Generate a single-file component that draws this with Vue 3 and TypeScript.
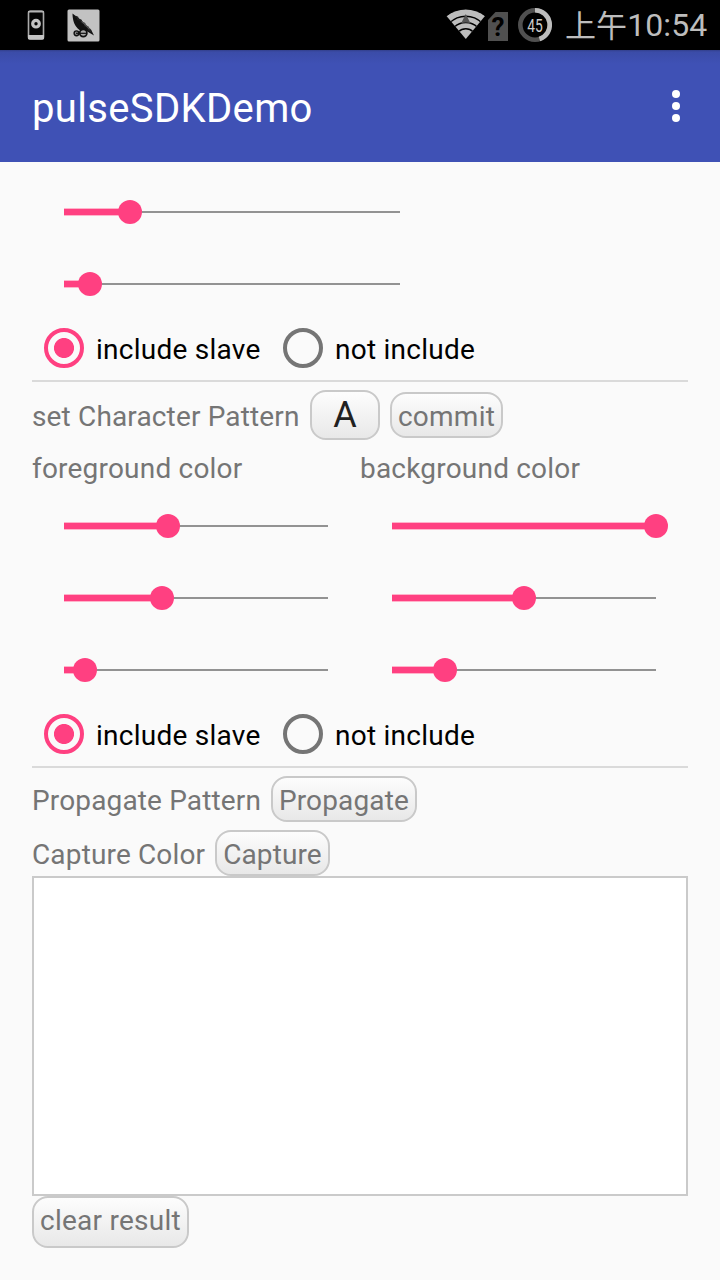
<script setup lang="ts">
import { ref } from 'vue'

const range = [66 / 336, 26 / 336]
const foreground = [104 / 264, 98 / 264, 21 / 264]
const background = [1, 0.5, 53 / 264]
const includeFirst = ref(true)
const includeSecond = ref(true)
const pct = (v: number) => `${v * 100}%`
</script>

<template>
  <div class="screen">
    <header class="status">
      <svg class="phone" width="18" height="30" viewBox="0 0 18 30">
        <rect x="1.5" y="1" width="15" height="28" rx="2" fill="#050505" stroke="#aaa" stroke-width="1.6" />
        <path d="M1 25h16v3.200q0 1.300-1.200 1.300H2.200Q1 29.500 1 28.200z" fill="#c4c4c4" />
        <path d="M1 1h16v1.500H1z" fill="#b5b5b5" />
        <circle cx="9" cy="13.700" r="3.300" fill="none" stroke="#c4c4c4" stroke-width="3.200" />
      </svg>
      <svg class="app" width="33" height="33" viewBox="0 0 33 33">
        <rect x=".5" y=".5" width="32" height="32" rx="1.500" fill="#c2c2c2" />
        <path d="M5.500 4.500C5.500 11 7.500 17.500 12.500 21l7 1 7.500 4.500-3-6-10-9.500z" fill="#111" />
        <path d="M8.500 7.500l2 .8.500 2 3 1 .5 2 3 1.200.5 2.500 3 1.300.5 2.500 3 2" fill="none" stroke="#222" stroke-width="1.600" />
        <path d="M15 12.500l8 8" stroke="#999" stroke-width=".7" />
        <circle cx="9.500" cy="24.300" r="2.400" fill="#888" stroke="#111" stroke-width="1.400" />
        <circle cx="16.300" cy="24" r="3.600" fill="#aaa" stroke="#111" stroke-width="1.700" />
        <path d="M9 24.300h11" stroke="#111" stroke-width="1.200" />
      </svg>
      <span class="grow"></span>
      <svg class="wifi" width="40" height="32" viewBox="0 0 40 32">
        <defs><clipPath id="fan"><path d="M.5 8C12-.8 27.500-.8 39 8L19.800 31z" /></clipPath></defs>
        <g clip-path="url(#fan)">
          <circle cx="19.800" cy="31" r="30" fill="#bdbdbd" />
          <g fill="none" stroke="#000" stroke-width="1.500">
            <circle cx="19.800" cy="31" r="22.800" />
            <circle cx="19.800" cy="31" r="16.500" />
            <circle cx="19.800" cy="31" r="10.300" />
          </g>
        </g>
        <path d="M19.800 6l4.800 9.500q-4.800-1.800-9.600 0z" fill="#555" />
      </svg>
      <svg class="sim" width="20" height="29" viewBox="0 0 20 29">
        <path d="M7.500 0H20v29H0V8z" fill="#505050" />
        <text x="10" y="24" text-anchor="middle" class="question">?</text>
      </svg>
      <svg class="battery" width="34" height="34" viewBox="0 0 34 34">
        <circle cx="17" cy="17" r="14.700" fill="none" stroke="#505050" stroke-width="4.600" />
        <path d="M17 2.300a14.700 14.700 0 0 1 4.500 28.700" fill="none" stroke="#bdbdbd" stroke-width="4.600" />
        <text x="17" y="23.500" text-anchor="middle" class="charge" textLength="15.500" lengthAdjust="spacingAndGlyphs">45</text>
      </svg>
      <span class="time"><span class="noon">上午</span>10:54</span>
    </header>

    <div class="bar">
      <h1>pulseSDKDemo</h1>
      <svg width="8" height="32" viewBox="0 0 8 32" fill="#fff">
        <circle cx="4" cy="4" r="4" /><circle cx="4" cy="16" r="4" /><circle cx="4" cy="28" r="4" />
      </svg>
    </div>

    <main>
      <div class="sliders narrow">
        <div v-for="(v, i) in range" :key="i" class="slider">
          <div class="track"><div class="fill" :style="{ width: pct(v) }"><i class="thumb"></i></div></div>
        </div>
      </div>

      <div class="radios">
        <label class="first" @click="includeFirst = true"><i class="radio" :class="{ on: includeFirst }"></i><span>include slave</span></label>
        <label @click="includeFirst = false"><i class="radio" :class="{ on: !includeFirst }"></i><span>not include</span></label>
      </div>
      <hr />

      <div class="row character">
        <span>set Character Pattern</span>
        <button class="letter">A</button>
        <button class="commit">commit</button>
      </div>

      <div class="columns">
        <section>
          <div class="caption">foreground color</div>
          <div v-for="(v, i) in foreground" :key="i" class="slider">
            <div class="track"><div class="fill" :style="{ width: pct(v) }"><i class="thumb"></i></div></div>
          </div>
        </section>
        <section>
          <div class="caption">background color</div>
          <div v-for="(v, i) in background" :key="i" class="slider">
            <div class="track"><div class="fill" :style="{ width: pct(v) }"><i class="thumb"></i></div></div>
          </div>
        </section>
      </div>

      <div class="radios">
        <label class="first" @click="includeSecond = true"><i class="radio" :class="{ on: includeSecond }"></i><span>include slave</span></label>
        <label @click="includeSecond = false"><i class="radio" :class="{ on: !includeSecond }"></i><span>not include</span></label>
      </div>
      <hr />

      <div class="row propagate">
        <span>Propagate Pattern</span>
        <button class="b-prop">Propagate</button>
      </div>
      <div class="row capture">
        <span>Capture Color</span>
        <button class="b-cap">Capture</button>
      </div>
      <div class="result"></div>
      <button class="clear">clear result</button>
    </main>
  </div>
</template>

<style>
body { margin: 0; background: #fafafa; }
</style>

<style scoped>
* { box-sizing: border-box; }
.screen {
  width: 720px; height: 1280px; overflow: hidden; background: #fafafa;
  font-family: Roboto, "Noto Sans CJK SC", sans-serif; font-size: 28px; line-height: 34px;
  color: #757575; letter-spacing: 0.25px; white-space: nowrap;
}
.status { height: 50px; background: #000; display: flex; align-items: center; padding: 0 12px 0 27px; }
.status svg { flex: none; }
.app { margin-left: 22px; }
.grow { flex: 1; }
.wifi { margin: -2px 2px 0 0; }
.sim { margin-right: 10px; margin-top: 2px; }
.question { font: 700 26px Roboto, sans-serif; fill: #000; letter-spacing: 0; }
.charge { font: 400 18.5px Roboto, sans-serif; fill: #ccc; letter-spacing: 0; }
.time { width: 143px; margin-left: 13px; color: #bdbdbd; font-size: 32px; font-weight: 400; letter-spacing: 0.1px; display: flex; align-items: center; }
.noon { font-family: "Noto Sans CJK SC", sans-serif; font-size: 31px; font-weight: 400; margin-top: -3px; }
.bar {
  height: 112px; padding: 0 40px 0 32px; display: flex; align-items: center; justify-content: space-between;
  background: linear-gradient(#323f8c 0, #3b4ca8 2px, #3f51b5 14px);
}
h1 { margin: 6px 0 0; font-size: 40px; line-height: 48px; font-weight: 400; color: #fff; letter-spacing: 0.35px; }
main { padding: 14px 32px 0; }
.slider { height: 72px; padding: 0 32px; display: flex; align-items: center; }
.narrow { width: 400px; }
.track { flex: 1; height: 8px; background: linear-gradient(transparent 3px, #929292 3px, #929292 5px, transparent 5px); }
.fill {
  height: 8px; display: flex; justify-content: flex-end; align-items: center;
  background: linear-gradient(#ffb3ca 1px, #ff4081 1px, #ff4081 7px, #ffb3ca 7px);
}
.thumb { flex: none; width: 24px; height: 24px; margin-right: -12px; border-radius: 50%; background: #ff4081; }
.radios { display: flex; height: 56px; padding-left: 12px; color: #000; }
.radios label { display: flex; align-items: center; }
.first { width: 239px; }
.radios span { margin: 4px 0 0 12px; }
.radio { width: 40px; height: 40px; border: 4px solid #757575; border-radius: 50%; display: block; }
.radio.on { border-color: #ff4081; background: radial-gradient(circle, #ff4081 9.600px, transparent 10.400px); }
hr { height: 2px; border: 0; margin: 4px 0 0; background: #dadada; }
.row { display: flex; align-items: center; }
.row > span { letter-spacing: 0.15px; }
button {
  font: inherit; color: #757575; letter-spacing: inherit; padding: 0; margin: 0; height: 46px;
  border: 2px solid #c9c9c9; border-radius: 16px; background: linear-gradient(#fdfdfd, #e8e8e8);
  background-clip: padding-box; flex: none; white-space: nowrap;
}
.character { height: 50px; margin-top: 8px; }
.character > span { width: 278px; margin-top: 3px; }
.letter { width: 70px; height: 50px; font-size: 36px; color: #212121; margin-right: 10px; }
.commit { width: 113px; padding-top: 3px; }
.columns { display: grid; grid-template-columns: 1fr 1fr; }
.caption { height: 50px; padding-top: 12px; letter-spacing: 0.2px; }
.propagate { height: 46px; margin-top: 8px; }
.propagate > span { width: 239px; margin-top: 4px; }
.b-prop { width: 146px; padding-top: 4px; letter-spacing: 0.15px; }
.capture { height: 46px; margin-top: 8px; }
.capture > span { width: 183px; margin-top: 4px; }
.b-cap { width: 115px; padding-top: 4px; letter-spacing: 0.1px; }
.result { height: 320px; border: 2px solid #cacaca; background: #fff; }
.clear { display: block; width: 157px; height: 52px; padding-bottom: 3px; }
</style>
